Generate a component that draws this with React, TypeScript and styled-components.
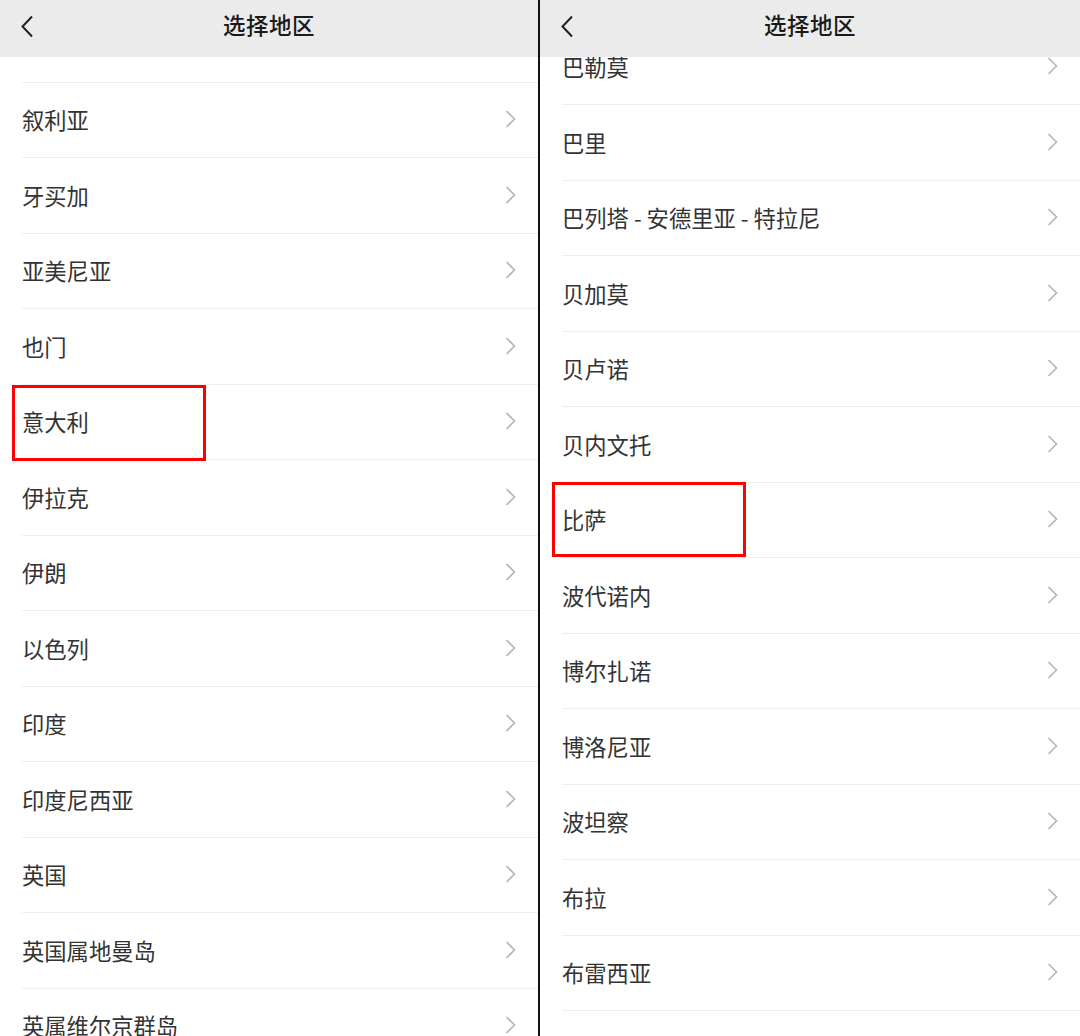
import React from "react";
import styled, { createGlobalStyle } from "styled-components";

const Global = createGlobalStyle`
  html, body { margin: 0; padding: 0; background: #fff; overflow: hidden; }
  body { font-family: "Noto Sans CJK SC", "Noto Sans", sans-serif; }
`;

const Screen = styled.div`
  display: grid;
  grid-template-columns: 538px 2px 540px;
  width: 1080px;
  height: 1036px;
  overflow: hidden;
`;

const Divider = styled.div`
  background: #111;
`;

const Panel = styled.section`
  display: flex;
  flex-direction: column;
  height: 1036px;
  overflow: hidden;
  background: #fff;
`;

const Header = styled.header`
  position: relative;
  z-index: 2;
  flex: 0 0 57px;
  display: flex;
  align-items: center;
  justify-content: center;
  background: #ebebeb;
`;

const BackButton = styled.button`
  position: absolute;
  left: 18px;
  top: 13px;
  width: 18px;
  height: 26px;
  padding: 0;
  border: 0;
  background: transparent;
  display: flex;
  align-items: center;
  justify-content: center;
`;

const Title = styled.h1`
  margin: 0;
  font-size: 22.5px;
  font-weight: 500;
  color: #1a1a1a;
  line-height: 1;
  letter-spacing: 0.5px;
  transform: translateY(-4px);
`;

const Viewport = styled.div`
  flex: 1;
  overflow: hidden;
  position: relative;
`;

const List = styled.ul<{ $offset: number }>`
  list-style: none;
  margin: ${(p) => -p.$offset}px 0 0;
  padding: 0;
`;

const Row = styled.li`
  position: relative;
  height: 75.5px;
  display: flex;
  align-items: center;
  justify-content: space-between;
  padding: 0 22px 2px 22px;
  box-sizing: border-box;
  &::after {
    content: "";
    position: absolute;
    left: 22px;
    right: 0;
    bottom: 0;
    height: 1px;
    background: #eeeeee;
  }
`;

const Label = styled.span`
  font-size: 22.3px;
  color: #333333;
  line-height: 1;
`;

const Mark = styled.div<{ $top: number; $height: number }>`
  position: absolute;
  z-index: 1;
  left: 12px;
  top: ${(p) => p.$top}px;
  width: 194px;
  height: ${(p) => p.$height}px;
  border: 3px solid #ff0000;
  box-sizing: border-box;
  pointer-events: none;
`;

const Back = () => (
  <svg width="14" height="23" viewBox="0 0 14 23">
    <path d="M12 1.5 L2.5 11.5 L12 21.5" fill="none" stroke="#222" strokeWidth="2" />
  </svg>
);

const Chevron = () => (
  <svg width="11" height="18" viewBox="0 0 11 18">
    <path d="M1.5 1 L9.5 9 L1.5 17" fill="none" stroke="#b5b5b5" strokeWidth="1.6" />
  </svg>
);

type Item = { name: string; mark?: { top: number; height: number } };

const leftItems: Item[] = [
  { name: "匈牙利" },
  { name: "叙利亚" },
  { name: "牙买加" },
  { name: "亚美尼亚" },
  { name: "也门" },
  { name: "意大利", mark: { top: 0, height: 76 } },
  { name: "伊拉克" },
  { name: "伊朗" },
  { name: "以色列" },
  { name: "印度" },
  { name: "印度尼西亚" },
  { name: "英国" },
  { name: "英国属地曼岛" },
  { name: "英属维尔京群岛" },
];

const rightItems: Item[] = [
  { name: "巴勒莫" },
  { name: "巴里" },
  { name: "巴列塔 - 安德里亚 - 特拉尼" },
  { name: "贝加莫" },
  { name: "贝卢诺" },
  { name: "贝内文托" },
  { name: "比萨", mark: { top: -1, height: 75 } },
  { name: "波代诺内" },
  { name: "博尔扎诺" },
  { name: "博洛尼亚" },
  { name: "波坦察" },
  { name: "布拉" },
  { name: "布雷西亚" },
  { name: "布林迪西" },
];

const RegionPanel = ({ items, offset }: { items: Item[]; offset: number }) => (
  <Panel>
    <Header>
      <BackButton aria-label="返回">
        <Back />
      </BackButton>
      <Title>选择地区</Title>
    </Header>
    <Viewport>
      <List $offset={offset}>
        {items.map((it) => (
          <Row key={it.name}>
            <Label>{it.name}</Label>
            <Chevron />
            {it.mark && <Mark $top={it.mark.top} $height={it.mark.height} />}
          </Row>
        ))}
      </List>
    </Viewport>
  </Panel>
);

export default function App() {
  return (
    <>
      <Global />
      <Screen>
        <RegionPanel items={leftItems} offset={50} />
        <Divider />
        <RegionPanel items={rightItems} offset={27.5} />
      </Screen>
    </>
  );
}
